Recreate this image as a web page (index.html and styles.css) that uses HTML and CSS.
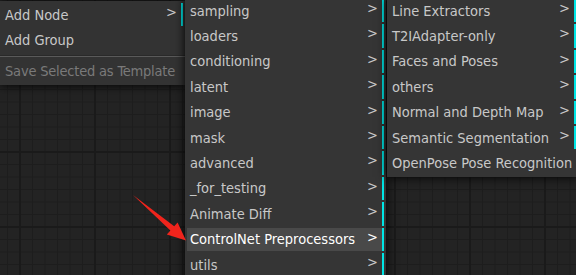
FILE: index.html
```html
<!DOCTYPE html>
<html>
<head>
<meta charset="utf-8">
<link rel="stylesheet" href="styles.css">
</head>
<body>
<div class="canvas">
  <div class="menu menu-main">
    <div class="entry has-sub">Add Node</div>
    <div class="entry">Add Group</div>
    <div class="separator"></div>
    <div class="entry disabled">Save Selected as Template</div>
  </div>

  <div class="menu menu-sub">
    <div class="entry has-sub">sampling</div>
    <div class="entry has-sub">loaders</div>
    <div class="entry has-sub">conditioning</div>
    <div class="entry has-sub">latent</div>
    <div class="entry has-sub">image</div>
    <div class="entry has-sub">mask</div>
    <div class="entry has-sub">advanced</div>
    <div class="entry has-sub">_for_testing</div>
    <div class="entry has-sub">Animate Diff</div>
    <div class="entry has-sub active">ControlNet Preprocessors</div>
    <div class="entry has-sub">utils</div>
  </div>

  <div class="menu menu-third">
    <div class="entry has-sub">Line Extractors</div>
    <div class="entry has-sub">T2IAdapter-only</div>
    <div class="entry has-sub">Faces and Poses</div>
    <div class="entry has-sub">others</div>
    <div class="entry has-sub">Normal and Depth Map</div>
    <div class="entry has-sub">Semantic Segmentation</div>
    <div class="entry">OpenPose Pose Recognition</div>
  </div>

  <svg class="arrow" width="576" height="275" viewBox="0 0 576 275">
    <polygon points="133,195 170.4,230.6 166.8,234.6 186,240.5 177.6,222.4 174.2,226.2" fill="#f0241c"/>
  </svg>
</div>
</body>
</html>
```
FILE: styles.css
```css
html, body {
  margin: 0;
  padding: 0;
}
body {
  width: 576px;
  height: 275px;
  overflow: hidden;
  background-color: #232323;
}
.canvas {
  position: relative;
  width: 576px;
  height: 275px;
  background-color: #232323;
  background-image:
    linear-gradient(to right, #1a1a1a 2px, transparent 2px),
    linear-gradient(to bottom, #1a1a1a 2px, transparent 2px),
    linear-gradient(to right, #1d1d1d 1px, transparent 1px),
    linear-gradient(to bottom, #1d1d1d 1px, transparent 1px);
  background-size: 75px 75px, 75px 75px, 12.5px 12.5px, 12.5px 12.5px;
  background-position: 19px 1px, 0 1px, 7px 0, 0 1.5px;
  font-family: "DejaVu Sans Condensed", "DejaVu Sans", sans-serif;
  font-stretch: condensed;
  font-size: 14.5px;
}
.menu {
  position: absolute;
  background-color: #353535;
  box-shadow: 0 0 10px #000;
  padding: 0;
  display: flex;
  flex-direction: column;
}
.menu-main {
  left: 0;
  top: 1px;
  width: 185px;
  background-color: #333333;
}
.menu-sub {
  left: 185px;
  top: -3px;
  width: 201px;
  height: 290px;
}
.menu-third {
  left: 387px;
  top: -3px;
  width: 191px;
}
.entry {
  display: flex;
  align-items: center;
  height: 23.4px;
  margin: 2px 2px 0 2px;
  padding-left: 3px;
  color: #c8c8c8;
  white-space: nowrap;
  overflow: hidden;
  box-sizing: border-box;
}
.menu-main .entry {
  overflow: visible;
}
.menu .entry:last-child {
  margin-bottom: 2px;
}
.entry.has-sub {
  border-right: 2px solid #00e5e5;
}
.entry.has-sub::after {
  content: ">";
  margin-left: auto;
  margin-right: 4px;
  align-self: flex-start;
  line-height: 18px;
  color: #c8c8c8;
}
.entry.active {
  background-color: #494949;
  color: #ffffff;
}
.entry.active::after {
  color: #ffffff;
}
.entry.disabled {
  color: #7a7a7a;
  letter-spacing: -0.2px;
}
.separator {
  margin: 3px 0 1px 0;
  border-top: 1px solid #2a2a2a;
  border-bottom: 1px solid #5a5a5a;
  height: 0;
}
.arrow {
  position: absolute;
  left: 0;
  top: 0;
  pointer-events: none;
}
```
